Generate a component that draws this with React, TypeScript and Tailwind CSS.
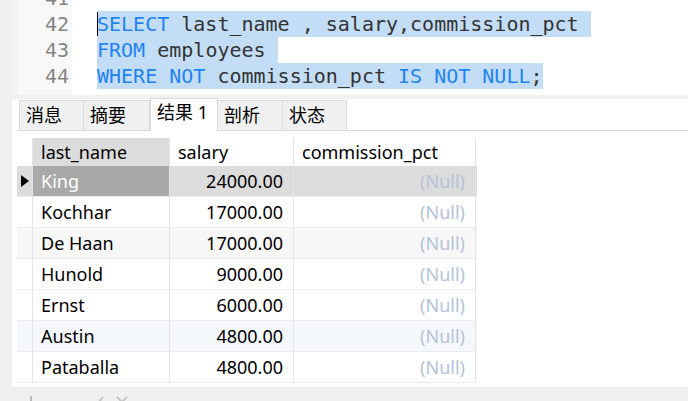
import React from "react";

type Tok = { t: string; kw?: boolean };

const lines: { n: number; toks: Tok[]; sel: boolean }[] = [
  { n: 41, toks: [], sel: false },
  {
    n: 42,
    sel: true,
    toks: [{ t: "SELECT", kw: true }, { t: " last_name , salary,commission_pct " }],
  },
  { n: 43, sel: true, toks: [{ t: "FROM", kw: true }, { t: " employees " }] },
  {
    n: 44,
    sel: true,
    toks: [
      { t: "WHERE NOT", kw: true },
      { t: " commission_pct " },
      { t: "IS NOT NULL", kw: true },
      { t: ";" },
    ],
  },
];

const rows = [
  { name: "King", salary: "24000.00", bg: "bg-[#dcdcdc]", current: true },
  { name: "Kochhar", salary: "17000.00", bg: "bg-white" },
  { name: "De Haan", salary: "17000.00", bg: "bg-[#f7f7f7]" },
  { name: "Hunold", salary: "9000.00", bg: "bg-white" },
  { name: "Ernst", salary: "6000.00", bg: "bg-white" },
  { name: "Austin", salary: "4800.00", bg: "bg-[#f4f8fc]" },
  { name: "Pataballa", salary: "4800.00", bg: "bg-white" },
];

const tabs = [
  { label: "消息", w: "w-[65px]" },
  { label: "摘要", w: "w-[66px]" },
  { label: "结果 1", w: "w-[68px]", active: true },
  { label: "剖析", w: "w-[65px]" },
  { label: "状态", w: "w-[64px]" },
];

function Editor() {
  return (
    <div className="h-[95px] overflow-hidden flex bg-white font-['DejaVu_Sans_Mono',monospace] text-[20px] leading-[26px]">
      <div className="w-[5px] bg-[#f2f2f2]" />
      <div className="w-[55px] bg-[#f8f8f8] flex flex-col -mt-[15px] text-right pr-[3px] text-[#858585]">
        {lines.map((l) => (
          <div key={l.n} className="h-[26px]">
            {l.n}
          </div>
        ))}
      </div>
      <div className="flex-1 flex flex-col -mt-[15px] pl-[25px]">
        {lines.map((l) => (
          <div key={l.n} className="h-[26px] flex">
            <span className={`relative whitespace-pre ${l.sel ? "bg-[#c3ddf6]" : ""}`}>
              {l.n === 42 && <span className="absolute left-0 top-px h-[24px] w-px bg-black" />}
              {l.toks.map((tk, i) => (
                <span key={i} className={tk.kw ? "text-[#1f83f2]" : "text-[#333]"}>
                  {tk.t}
                </span>
              ))}
            </span>
          </div>
        ))}
      </div>
    </div>
  );
}

function Tabs() {
  return (
    <div className="h-[32px] flex items-end border-b border-[#d9d9d9] pl-[2px] bg-white">
      {tabs.map((t) =>
        t.active ? (
          <div
            key={t.label}
            className={`${t.w} h-[33px] -mb-px relative z-10 bg-white border border-b-0 border-[#d9d9d9] pl-[6px] pb-[6px] flex items-center`}
          >
            {t.label}
          </div>
        ) : (
          <div
            key={t.label}
            className={`${t.w} h-[30px] bg-[#f0f0f0] border border-b-0 border-l-0 first:border-l border-[#dcdcdc] pl-[6px] flex items-center`}
          >
            {t.label}
          </div>
        )
      )}
    </div>
  );
}

function Grid() {
  return (
    <div className="mt-[7px] w-[460px] flex flex-col">
      <div className="h-[28px] flex">
        <div className="w-[16px] border-r border-[#e4e4e4] bg-white" />
        <div className="w-[137px] border-r border-[#e4e4e4] bg-[#dcdcdc] pl-[8px] flex items-center">last_name</div>
        <div className="w-[124px] border-r border-[#e4e4e4] bg-white pl-[8px] flex items-center">salary</div>
        <div className="w-[182px] border-r border-[#e4e4e4] bg-white pl-[8px] flex items-center">commission_pct</div>
      </div>
      {rows.map((r) => (
        <div key={r.name} className={`h-[31px] flex border-b border-[#ececec] ${r.bg}`}>
          <div className="w-[16px] border-r border-[#e4e4e4] flex items-center justify-center">
            {r.current && (
              <svg width="8" height="12" viewBox="0 0 8 12">
                <path d="M0 0L8 6L0 12Z" fill="#000" />
              </svg>
            )}
          </div>
          <div
            className={`w-[137px] border-r border-[#e4e4e4] pl-[8px] flex items-center ${
              r.current ? "bg-[#a9a9a9] text-white" : ""
            }`}
          >
            {r.name}
          </div>
          <div className="w-[124px] border-r border-[#e4e4e4] pr-[10px] flex items-center justify-end">{r.salary}</div>
          <div className="w-[182px] border-r border-[#e4e4e4] pr-[10px] flex items-center justify-end text-[#b6c2da]">
            (Null)
          </div>
        </div>
      ))}
    </div>
  );
}

export default function App() {
  return (
    <div className="w-[688px] h-[401px] overflow-hidden flex bg-white text-[#000] font-['Noto_Sans','Noto_Sans_CJK_SC',sans-serif] text-[18px]">
      <div className="w-[12px] bg-[#f0f0f0]" />
      <div className="flex-1 flex flex-col">
        <Editor />
        <div className="h-[4px] bg-[#f0f0f0]" />
        <div className="flex-1 flex flex-col pl-[5px] bg-white">
          <Tabs />
          <Grid />
          <div className="h-[4px]" />
        </div>
        {/* toolbar below the grid, only its top edge shows */}
        <div className="h-[14px] bg-[#f0f0f0] flex items-start pt-[9px] pl-[18px] gap-[58px] overflow-hidden">
          <div className="w-[2px] h-[10px] bg-[#b8b8b8]" />
          <div className="flex gap-[12px]">
            <svg width="14" height="12" viewBox="0 0 14 12" fill="none" stroke="#c4c4c4" strokeWidth="2">
              <path d="M1 7l4 4 8-10" />
            </svg>
            <svg width="12" height="12" viewBox="0 0 12 12" fill="none" stroke="#c4c4c4" strokeWidth="2">
              <path d="M1 1l10 10M11 1L1 11" />
            </svg>
          </div>
        </div>
      </div>
    </div>
  );
}
